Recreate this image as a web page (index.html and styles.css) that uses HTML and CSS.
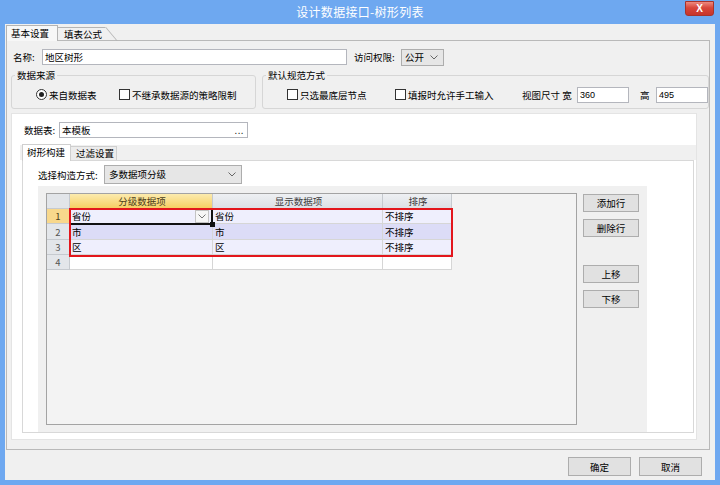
FILE: index.html
```html
<!DOCTYPE html>
<html lang="zh-CN">
<head>
    <meta charset="UTF-8">
    <meta name="viewport" content="width=device-width, initial-scale=1.0">
    <title>设计数据接口-树形列表</title>
    <link rel="stylesheet" href="styles.css">
</head>
<body>
    <div class="window">
        <div class="titlebar">
            <div></div>
            <div class="title">设计数据接口-树形列表</div>
            <div class="title-btns"><button class="close-btn">X</button></div>
        </div>

        <div class="client">
            <div class="tabs">
                <div class="tab active">基本设置</div>
                <div class="tab slant">填表公式</div>
            </div>

            <div class="tabpage">
                <div class="name-row">
                    <span class="lbl lbl-name">名称:</span>
                    <div class="textbox name-box">地区树形</div>
                    <span class="lbl lbl-access">访问权限:</span>
                    <div class="combo access-combo">
                        <span>公开</span>
                        <svg class="chev" width="8" height="5" viewBox="0 0 8 5"><polyline points="0.5,0.5 4,4 7.5,0.5" fill="none" stroke="#666" stroke-width="1"/></svg>
                    </div>
                </div>

                <div class="groups">
                    <fieldset class="group group-source">
                        <legend>数据来源</legend>
                        <span class="option opt-radio"><span class="radio checked"></span>来自数据表</span>
                        <span class="option"><span class="check"></span>不继承数据源的策略限制</span>
                    </fieldset>
                    <fieldset class="group group-rule">
                        <legend>默认规范方式</legend>
                        <span class="option opt-leaf"><span class="check"></span>只选最底层节点</span>
                        <span class="option opt-manual"><span class="check"></span>填报时允许手工输入</span>
                        <span class="lbl lbl-size">视图尺寸 宽</span>
                        <div class="textbox size-box">360</div>
                        <span class="lbl lbl-height">高</span>
                        <div class="textbox size-box">495</div>
                    </fieldset>
                </div>

                <div class="panel">
                    <div class="table-row">
                        <span class="lbl lbl-table">数据表:</span>
                        <div class="textbox table-box"><span>本模板</span><span class="dots">...</span></div>
                    </div>

                    <div class="subtabs">
                        <div class="subtab active">树形构建</div>
                        <div class="subtab">过滤设置</div>
                    </div>

                    <div class="subpage">
                        <div class="method-row">
                            <span class="lbl lbl-method">选择构造方式:</span>
                            <div class="combo method-combo">
                                <span>多数据项分级</span>
                                <svg class="chev" width="8" height="5" viewBox="0 0 8 5"><polyline points="0.5,0.5 4,4 7.5,0.5" fill="none" stroke="#666" stroke-width="1"/></svg>
                            </div>
                        </div>

                        <div class="grid-panel">
                            <div class="grid-box">
                                <table class="grid-table">
                                    <colgroup>
                                        <col class="c-rh"><col class="c-1"><col class="c-2"><col class="c-3">
                                    </colgroup>
                                    <thead>
                                        <tr>
                                            <th class="corner"></th>
                                            <th class="hd-active">分级数据项</th>
                                            <th>显示数据项</th>
                                            <th>排序</th>
                                        </tr>
                                    </thead>
                                    <tbody>
                                        <tr class="row-odd">
                                            <td class="rh rh-active">1</td>
                                            <td class="edit-cell">
                                                <div class="cell-combo">
                                                    <span>省份</span>
                                                    <span class="cell-drop"><svg width="8" height="5" viewBox="0 0 8 5"><polyline points="0.5,0.5 4,4 7.5,0.5" fill="none" stroke="#777" stroke-width="1"/></svg></span>
                                                </div>
                                            </td>
                                            <td>省份</td>
                                            <td>不排序</td>
                                        </tr>
                                        <tr class="row-even">
                                            <td class="rh">2</td>
                                            <td>市</td>
                                            <td>市</td>
                                            <td>不排序</td>
                                        </tr>
                                        <tr class="row-odd">
                                            <td class="rh">3</td>
                                            <td>区</td>
                                            <td>区</td>
                                            <td>不排序</td>
                                        </tr>
                                        <tr class="row-blank">
                                            <td class="rh">4</td>
                                            <td></td>
                                            <td></td>
                                            <td></td>
                                        </tr>
                                    </tbody>
                                </table>
                                <div class="cell-select"><span class="fill-handle"></span></div>
                                <div class="mark"></div>
                            </div>

                            <div class="grid-buttons">
                                <button class="btn">添加行</button>
                                <button class="btn">删除行</button>
                                <button class="btn btn-gap">上移</button>
                                <button class="btn">下移</button>
                            </div>
                        </div>
                    </div>
                </div>
            </div>

            <div class="footer">
                <button class="btn footer-btn">确定</button>
                <button class="btn footer-btn">取消</button>
            </div>
        </div>
    </div>
</body>
</html>
```

FILE: styles.css
```css
body {
    margin: 0;
    padding: 0;
    font-family: "Noto Sans CJK SC", "Noto Sans", sans-serif;
    font-size: 9.5px;
    color: #000;
    background-color: #6ea8f0;
}
.window {
    width: 720px;
    height: 485px;
    background-color: #6ea8f0;
    display: flex;
    flex-direction: column;
}
.titlebar {
    height: 24px;
    flex: none;
    display: grid;
    grid-template-columns: 1fr auto 1fr;
}
.title {
    color: white;
    font-size: 12px;
    line-height: 24px;
    letter-spacing: 0.3px;
}
.title-btns {
    display: flex;
    justify-content: flex-end;
    align-items: flex-start;
}
.close-btn {
    width: 29px;
    height: 15px;
    margin: 1px 6px 0 0;
    padding: 0;
    border: 1px solid #a8332b;
    border-radius: 0 0 3px 3px;
    background: linear-gradient(#ec8a80, #d8463b 45%, #c7342a);
    color: white;
    font-family: "Liberation Sans", Arial, sans-serif;
    font-size: 10px;
    font-weight: bold;
    line-height: 13px;
}
.client {
    flex: 1;
    margin: 0 5px 5px;
    padding-top: 1px;
    background-color: #f0f0f0;
    display: flex;
    flex-direction: column;
}
.tabs {
    height: 15px;
    display: flex;
    align-items: flex-end;
    padding-left: 1px;
    position: relative;
    z-index: 1;
}
.tab {
    box-sizing: border-box;
    height: 13px;
    line-height: 12px;
    border: 1px solid #b4b4b4;
    border-bottom: none;
    white-space: nowrap;
}
.tab.active {
    width: 52px;
    height: 16px;
    margin-bottom: -1px;
    padding-left: 4px;
    line-height: 15px;
    background-color: #f7f7f7;
}
.tab.slant {
    width: 47px;
    padding-left: 6px;
    border-left: none;
    border-right: none;
    position: relative;
}
.tab.slant::after {
    content: '';
    position: absolute;
    left: 100%;
    top: -1px;
    height: 14px;
    border-left: 1px solid #b4b4b4;
    transform: skewX(40deg);
    transform-origin: top left;
}
.tabpage {
    box-sizing: border-box;
    width: 704px;
    height: 410px;
    margin-left: 1px;
    border: 1px solid #b9b9b9;
    background-color: #f0f0f0;
}
.lbl {
    white-space: nowrap;
}
.textbox {
    box-sizing: border-box;
    height: 16px;
    border: 1px solid #b4b6bd;
    background-color: white;
    padding-left: 2px;
    line-height: 14px;
    white-space: nowrap;
}
.combo {
    box-sizing: border-box;
    height: 17px;
    border: 1px solid #adadad;
    background-color: #e6e6e6;
    padding: 0 5px 0 3px;
    display: flex;
    justify-content: space-between;
    align-items: center;
    line-height: 15px;
}
.name-row {
    margin-top: 8px;
    padding-left: 6px;
    height: 16px;
    display: flex;
    align-items: center;
}
.lbl-name {
    width: 29px;
}
.name-box {
    width: 305px;
}
.lbl-access {
    width: 47px;
    margin-left: 7px;
}
.access-combo {
    width: 43px;
}
.groups {
    margin: 4px 0 0 4px;
    display: flex;
    gap: 6px;
}
.group {
    box-sizing: border-box;
    height: 40px;
    margin: 0;
    padding: 0 0 0 3px;
    border: 1px solid #d6d6d6;
    border-radius: 3px;
    display: flex;
    align-items: center;
}
.group legend {
    padding: 0 2px;
    line-height: 12px;
    color: #000;
}
.group-source {
    width: 246px;
}
.group-rule {
    width: 444px;
}
.option {
    display: flex;
    align-items: center;
    gap: 2px;
    white-space: nowrap;
}
.radio, .check {
    box-sizing: border-box;
    width: 11px;
    height: 11px;
    border: 1px solid #333;
    background-color: white;
    flex: none;
}
.radio {
    border-radius: 50%;
    display: flex;
    align-items: center;
    justify-content: center;
}
.radio.checked::after {
    content: '';
    width: 5px;
    height: 5px;
    border-radius: 50%;
    background-color: #222;
}
.opt-radio {
    width: 83px;
    margin-left: 21px;
}
.opt-leaf {
    width: 108px;
    margin-left: 21px;
}
.opt-manual {
    width: 127px;
}
.lbl-size {
    width: 55px;
}
.size-box {
    width: 52px;
    font-family: "Liberation Sans", Arial, sans-serif;
    font-size: 9px;
}
.lbl-height {
    width: 16px;
    margin-left: 11px;
}
.panel {
    box-sizing: border-box;
    width: 686px;
    height: 327px;
    margin: 4px 0 0 4px;
    border: 1px solid #e4e4e4;
    background-color: white;
}
.table-row {
    margin-top: 8px;
    padding-left: 12px;
    height: 16px;
    display: flex;
    align-items: center;
}
.lbl-table {
    width: 35px;
}
.table-box {
    width: 189px;
    display: flex;
    justify-content: space-between;
    padding-right: 3px;
}
.dots {
    letter-spacing: 0.5px;
}
.subtabs {
    margin: 7px 0 0 8px;
    width: 676px;
    height: 15px;
    background-color: #f0f0f0;
    display: flex;
    align-items: flex-end;
    position: relative;
    z-index: 1;
}
.subtab {
    box-sizing: border-box;
    height: 14px;
    width: 46px;
    border: 1px solid #cfcfcf;
    border-left: none;
    border-bottom: none;
    background-color: #ececec;
    padding-left: 5px;
    line-height: 13px;
}
.subtab.active {
    width: 49px;
    height: 17px;
    margin: 0 0 -1px 2px;
    border-left: 1px solid #cfcfcf;
    background-color: white;
    padding-left: 4px;
    line-height: 15px;
}
.subpage {
    box-sizing: border-box;
    width: 672px;
    height: 273px;
    margin-left: 10px;
    border: 1px solid #d8d8d8;
    background-color: white;
}
.method-row {
    margin-top: 4px;
    padding-left: 15px;
    height: 19px;
    display: flex;
    align-items: center;
}
.lbl-method {
    width: 66px;
}
.method-combo {
    width: 138px;
    height: 19px;
    padding-left: 4px;
}
.grid-panel {
    box-sizing: border-box;
    width: 609px;
    height: 246px;
    margin: 2px 0 0 15px;
    padding: 7px 0 0 8px;
    background-color: #f0f0f0;
    display: flex;
    align-items: flex-start;
}
.grid-box {
    box-sizing: border-box;
    width: 531px;
    height: 232px;
    border: 1px solid #a3a3a3;
    background-color: #f3f3f3;
    position: relative;
}
.grid-table {
    border-collapse: separate;
    border-spacing: 0;
    table-layout: fixed;
    width: 405px;
}
.c-rh { width: 23px; }
.c-1 { width: 143px; }
.c-2 { width: 170px; }
.c-3 { width: 69px; }
.grid-table th, .grid-table td {
    box-sizing: border-box;
    height: 15px;
    padding: 0 0 0 2px;
    border-right: 1px solid #d6d6d6;
    border-bottom: 1px solid #d6d6d6;
    line-height: 14px;
    white-space: nowrap;
    overflow: hidden;
    text-align: left;
    font-weight: normal;
}
.grid-table th {
    text-align: center;
    color: #3d3d3d;
    background: linear-gradient(#eef0f3, #dce0e5);
    border-right-color: #c6cacf;
    border-bottom-color: #c6cacf;
}
.grid-table th.corner {
    background: #e2e5e9;
}
.grid-table th.hd-active {
    background: linear-gradient(#fcebae, #f6cf63);
    border-bottom-color: #e3b344;
    color: #4a3d1a;
}
.grid-table td.rh {
    padding: 0;
    text-align: center;
    color: #555;
    background-color: #e3e6ea;
    border-right-color: #c6cacf;
    border-bottom-color: #c6cacf;
}
.grid-table td.rh-active {
    background-color: #f8d88c;
    color: #4a3d1a;
}
.row-odd td {
    background-color: #efeffd;
}
.row-even td {
    height: 16px;
    background-color: #dcdcf7;
}
.row-blank td {
    background-color: white;
}
.grid-table td.edit-cell {
    padding: 0 3px 0 2px;
}
.cell-combo {
    display: flex;
    justify-content: space-between;
    align-items: center;
}
.cell-drop {
    box-sizing: border-box;
    width: 14px;
    height: 13px;
    border: 1px solid #c3c3c3;
    background-color: #f6f6f6;
    display: flex;
    align-items: center;
    justify-content: center;
}
.cell-select {
    position: absolute;
    left: 22px;
    top: 14px;
    width: 144px;
    height: 17px;
    box-sizing: border-box;
    border: 2px solid #111;
}
.fill-handle {
    position: absolute;
    right: -4px;
    bottom: -4px;
    width: 5px;
    height: 5px;
    background-color: #111;
}
.mark {
    position: absolute;
    left: 22px;
    top: 14px;
    width: 384px;
    height: 49px;
    box-sizing: border-box;
    border: 2px solid #e3161c;
}
.grid-buttons {
    margin-left: 6px;
    padding-top: 1px;
    display: flex;
    flex-direction: column;
    gap: 7px;
}
.btn {
    box-sizing: border-box;
    width: 56px;
    height: 18px;
    padding: 0;
    border: 1px solid #adadad;
    background-color: #e1e1e1;
    font-family: "Noto Sans CJK SC", "Noto Sans", sans-serif;
    font-size: 9.5px;
    line-height: 16px;
    color: #000;
}
.btn-gap {
    margin-top: 21px;
}
.footer {
    margin: 7px 13px 0 0;
    display: flex;
    justify-content: flex-end;
    gap: 8px;
}
.footer-btn {
    width: 63px;
    height: 19px;
}
```
